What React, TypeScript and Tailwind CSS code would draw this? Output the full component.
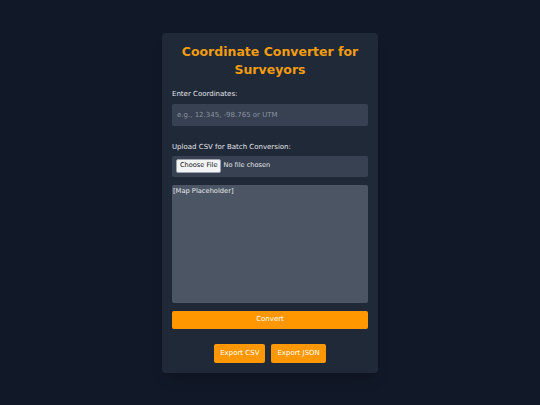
import { useState } from 'react';

const FONT = "font-['DejaVu_Sans','Liberation_Sans',sans-serif]";

const ExportButton = ({ label }: { label: string }) => (
  <button className="h-[19px] rounded-[2px] bg-[#ff9800] px-[6px] text-[7px] leading-none text-white">
    {label}
  </button>
);

export default function App() {
  const [coords, setCoords] = useState('');

  return (
    <div
      className={`flex min-h-screen items-center justify-center bg-[#111827] text-[#e5e7eb] ${FONT}`}
    >
      <div className="flex w-[216px] flex-col rounded-[4px] bg-[#1f2937] px-[10px] py-[10px] shadow-lg">
        <h1 className="h-[36px] text-center text-[12.5px] font-bold leading-[18px] text-[#f39c12]">
          Coordinate Converter for Surveyors
        </h1>

        {/* coordinate input */}
        <label className="mt-[10px] h-[10px] text-[7px] leading-[10px]">
          Enter Coordinates:
        </label>
        <input
          value={coords}
          onChange={(e) => setCoords(e.target.value)}
          placeholder="e.g., 12.345, -98.765 or UTM"
          className="mt-[5px] h-[22px] rounded-[2px] bg-[#374151] px-[5px] text-[7px] outline-none placeholder:text-[#8b93a1]"
        />

        {/* batch upload */}
        <label className="mt-[16px] h-[10px] text-[7px] leading-[10px]">
          Upload CSV for Batch Conversion:
        </label>
        <div className="mt-[4px] flex h-[21px] items-center rounded-[2px] bg-[#374151] px-[4px]">
          <input
            type="file"
            accept=".csv"
            className="text-[6.6px] text-[#e5e7eb] file:mr-[2px] file:h-[14px] file:rounded-[2px] file:border file:border-[#9ca3af] file:bg-[#f3f4f6] file:px-[3px] file:text-[6.6px] file:text-[#111]"
          />
        </div>

        {/* map area */}
        <div className="mt-[8px] h-[118px] rounded-[2px] bg-[#4b5563] px-[1px] py-[1px] text-[6.7px] leading-[10px] text-[#e5e7eb]">
          [Map Placeholder]
        </div>

        <button className="mt-[8px] h-[18px] rounded-[2px] bg-[#ff9800] text-[7px] leading-none text-white">
          Convert
        </button>

        <div className="mt-[15px] flex justify-center gap-[6px]">
          <ExportButton label="Export CSV" />
          <ExportButton label="Export JSON" />
        </div>
      </div>
    </div>
  );
}
